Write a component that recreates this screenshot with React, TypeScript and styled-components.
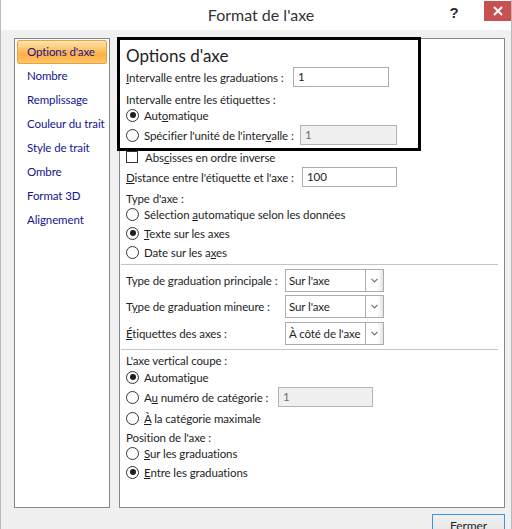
import React from 'react'
import styled, { createGlobalStyle } from 'styled-components'

const GlobalStyle = createGlobalStyle`
  html, body {
    margin: 0;
    padding: 0;
    background: #f0f0f0;
  }
  * {
    box-sizing: border-box;
  }
`

const FONT = `Lato, "Open Sans", sans-serif`

const Window = styled.div`
  position: relative;
  width: 512px;
  height: 529px;
  overflow: hidden;
  background: #f0f0f0;
  border-left: 1px solid #b9b9b9;
  border-right: 1px solid #b9b9b9;
  font-family: ${FONT};
  font-size: 11.5px;
  letter-spacing: -0.1px;
  color: #1e1e1e;
`

const TitleBar = styled.div`
  display: flex;
  align-items: flex-start;
  height: 30px;
  background: #ffffff;
`

const Title = styled.div`
  flex: 1;
  padding-left: 82px;
  height: 30px;
  line-height: 30px;
  text-align: center;
  font-size: 16px;
  letter-spacing: 0;
  color: #333333;
`

const HelpButton = styled.div`
  width: 30px;
  height: 26px;
  line-height: 26px;
  margin-right: 15px;
  text-align: center;
  font-family: "Liberation Sans", sans-serif;
  font-size: 15px;
  font-weight: bold;
  color: #2b2b2b;
`

const CloseButton = styled.div`
  display: flex;
  align-items: center;
  justify-content: center;
  width: 27px;
  height: 20px;
  margin-top: 1px;
  background: #c75050;
`

const Body = styled.div`
  display: flex;
  flex-direction: column;
`

const Main = styled.div`
  display: flex;
  gap: 9px;
  height: 478px;
  padding: 8px 6px 0 13px;
`

const Nav = styled.div`
  display: flex;
  flex-direction: column;
  width: 96px;
  padding: 1px 2px;
  background: #ffffff;
  border: 1px solid #828790;
`

const NavItem = styled.div<{ $active?: boolean }>`
  height: 24px;
  line-height: 22px;
  padding-left: 9px;
  color: #15158f;
  white-space: nowrap;
  border: 1px solid ${(p) => (p.$active ? '#e8a443' : 'transparent')};
  border-radius: 2px;
  background: ${(p) =>
    p.$active
      ? 'linear-gradient(to bottom, #fde4b0 0%, #fdc872 35%, #ffae45 60%, #ffc867 100%)'
      : 'transparent'};
`

const Panel = styled.div`
  flex: 1;
  display: flex;
  flex-direction: column;
  padding: 6px 6px 0 6px;
  background: #ffffff;
  border: 1px solid #828790;
`

const Heading = styled.div`
  height: 22px;
  line-height: 22px;
  font-size: 17px;
  letter-spacing: 0;
  color: #1e1e1e;
`

const Row = styled.div<{ $h?: number; $mt?: number }>`
  display: flex;
  align-items: center;
  height: ${(p) => p.$h ?? 16}px;
  margin-top: ${(p) => p.$mt ?? 0}px;
  white-space: nowrap;
`

const Label = styled.span<{ $w?: number }>`
  display: inline-block;
  width: ${(p) => (p.$w ? `${p.$w}px` : 'auto')};
  flex-shrink: 0;
`

const TextBox = styled.div<{ $w: number; $disabled?: boolean }>`
  width: ${(p) => p.$w}px;
  height: 20px;
  line-height: 18px;
  padding-left: 4px;
  border: 1px solid ${(p) => (p.$disabled ? '#b4b4b4' : '#acacac')};
  background: ${(p) => (p.$disabled ? '#f0f0f0' : '#ffffff')};
  color: ${(p) => (p.$disabled ? '#6d6d6d' : '#1e1e1e')};
`

const Select = styled.div`
  display: flex;
  width: 99px;
  height: 23px;
  border: 1px solid #acacac;
  background: #ffffff;
`

const SelectValue = styled.div`
  flex: 1;
  line-height: 21px;
  padding-left: 3px;
  overflow: hidden;
`

const SelectButton = styled.div`
  display: flex;
  align-items: center;
  justify-content: center;
  width: 18px;
  border-left: 1px solid #acacac;
  background: linear-gradient(to right, #ffffff 0%, #ffffff 70%, #e3e3e3 100%);
`

const RadioCircle = styled.span<{ $checked?: boolean }>`
  position: relative;
  display: inline-block;
  width: 13px;
  height: 13px;
  margin-right: 5px;
  flex-shrink: 0;
  border: 1px solid #333333;
  border-radius: 50%;
  background: #ffffff;

  &::after {
    content: '';
    display: ${(p) => (p.$checked ? 'block' : 'none')};
    position: absolute;
    left: 2.5px;
    top: 2.5px;
    width: 6px;
    height: 6px;
    border-radius: 50%;
    background: #1e1e1e;
  }
`

const CheckBox = styled.span`
  display: inline-block;
  width: 12px;
  height: 12px;
  margin-right: 7px;
  flex-shrink: 0;
  border: 1px solid #333333;
  background: #ffffff;
`

const Separator = styled.div<{ $mt: number }>`
  height: 1px;
  margin: ${(p) => p.$mt}px 0 0 -5px;
  background: #c4c4c4;
`

const Footer = styled.div`
  display: flex;
  justify-content: flex-end;
  padding: 6px 6px 0 0;
`

const Button = styled.div`
  width: 73px;
  height: 23px;
  line-height: 21px;
  text-align: center;
  font-size: 12px;
  color: #1e1e1e;
  border: 1px solid #3c94e5;
  background: linear-gradient(to bottom, #f0f0f0, #e5e5e5);
`

const Highlight = styled.div`
  position: absolute;
  left: 116px;
  top: 37px;
  width: 304px;
  height: 114px;
  border: 3px solid #000000;
  pointer-events: none;
`

const Chevron = () => (
  <svg width="7" height="5" viewBox="0 0 7 5">
    <path d="M0.5 0.8 L3.5 3.8 L6.5 0.8" fill="none" stroke="#707070" strokeWidth="1.2" />
  </svg>
)

const CloseIcon = () => (
  <svg width="10" height="10" viewBox="0 0 10 10">
    <path d="M1 1 L9 9 M9 1 L1 9" stroke="#ffffff" strokeWidth="2" />
  </svg>
)

const Radio: React.FC<{ checked?: boolean; children: React.ReactNode; w?: number }> = ({
  checked,
  children,
  w,
}) => (
  <>
    <RadioCircle $checked={checked} />
    <Label $w={w}>{children}</Label>
  </>
)

const navItems = [
  "Options d'axe",
  'Nombre',
  'Remplissage',
  'Couleur du trait',
  'Style de trait',
  'Ombre',
  'Format 3D',
  'Alignement',
]

export default function App() {
  return (
    <>
      <GlobalStyle />
      <Window>
        <TitleBar>
          <Title>Format de l'axe</Title>
          <HelpButton>?</HelpButton>
          <CloseButton>
            <CloseIcon />
          </CloseButton>
        </TitleBar>
        <Body>
          <Main>
            <Nav>
              {navItems.map((item, i) => (
                <NavItem key={item} $active={i === 0}>
                  {item}
                </NavItem>
              ))}
            </Nav>
            <Panel>
              <Heading>Options d'axe</Heading>
              <Row $h={20}>
                <Label $w={167}>
                  <u>I</u>ntervalle entre les graduations :
                </Label>
                <TextBox $w={96}>1</TextBox>
              </Row>
              <Row $mt={4}>Intervalle entre les étiquettes :</Row>
              <Row>
                <Radio checked>
                  Aut<u>o</u>matique
                </Radio>
              </Row>
              <Row $h={20} $mt={2}>
                <Radio w={156}>
                  Spécifier l'unité de l'inter<u>v</u>alle :
                </Radio>
                <TextBox $w={97} $disabled>
                  1
                </TextBox>
              </Row>
              <Row $mt={4}>
                <CheckBox />
                <Label>
                  Abs<u>c</u>isses en ordre inverse
                </Label>
              </Row>
              <Row $h={20} $mt={2}>
                <Label $w={176}>
                  <u>D</u>istance entre l'étiquette et l'axe :
                </Label>
                <TextBox $w={95}>100</TextBox>
              </Row>
              <Row $mt={3}>Type d'axe :</Row>
              <Row>
                <Radio>
                  Sélection <u>a</u>utomatique selon les données
                </Radio>
              </Row>
              <Row $mt={3}>
                <Radio checked>
                  <u>T</u>exte sur les axes
                </Radio>
              </Row>
              <Row $mt={3}>
                <Radio>
                  Date sur les a<u>x</u>es
                </Radio>
              </Row>
              <Separator $mt={4} />
              <Row $h={23} $mt={4}>
                <Label $w={159}>
                  Type de <u>g</u>raduation principale :
                </Label>
                <Select>
                  <SelectValue>Sur l'axe</SelectValue>
                  <SelectButton>
                    <Chevron />
                  </SelectButton>
                </Select>
              </Row>
              <Row $h={23} $mt={3}>
                <Label $w={159}>
                  T<u>y</u>pe de graduation mineure :
                </Label>
                <Select>
                  <SelectValue>Sur l'axe</SelectValue>
                  <SelectButton>
                    <Chevron />
                  </SelectButton>
                </Select>
              </Row>
              <Row $h={23} $mt={4}>
                <Label $w={159}>
                  <u>É</u>tiquettes des axes :
                </Label>
                <Select>
                  <SelectValue>À côté de l'axe</SelectValue>
                  <SelectButton>
                    <Chevron />
                  </SelectButton>
                </Select>
              </Row>
              <Separator $mt={4} />
              <Row $mt={2}>L'axe vertical coupe :</Row>
              <Row $mt={1}>
                <Radio checked>
                  Automati<u>q</u>ue
                </Radio>
              </Row>
              <Row $h={20} $mt={2}>
                <Radio w={134}>
                  A<u>u</u> numéro de catégorie :
                </Radio>
                <TextBox $w={95} $disabled>
                  1
                </TextBox>
              </Row>
              <Row $mt={3}>
                <Radio>
                  <u>À</u> la catégorie maximale
                </Radio>
              </Row>
              <Row $mt={3}>Position de l'axe :</Row>
              <Row>
                <Radio>
                  <u>S</u>ur les graduations
                </Radio>
              </Row>
              <Row $mt={3}>
                <Radio checked>
                  <u>E</u>ntre les graduations
                </Radio>
              </Row>
            </Panel>
          </Main>
          <Footer>
            <Button>Fermer</Button>
          </Footer>
        </Body>
        <Highlight />
      </Window>
    </>
  )
}
